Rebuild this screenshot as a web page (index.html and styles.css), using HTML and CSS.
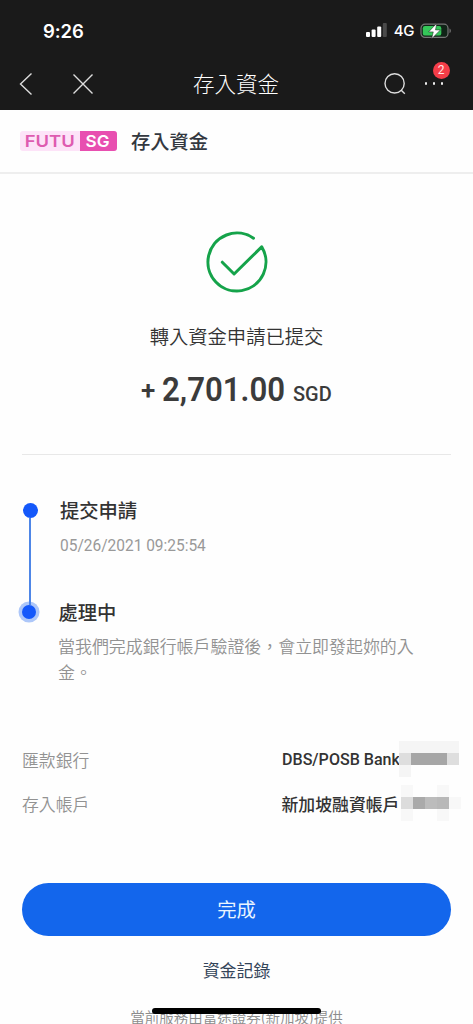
FILE: index.html
```html
<!DOCTYPE html>
<html lang="zh-Hant">
<head>
<meta charset="utf-8">
<meta name="viewport" content="width=device-width, initial-scale=1">
<title>存入資金</title>
<link rel="stylesheet" href="styles.css">
</head>
<body>
<div class="screen">
  <header class="top">
    <div class="status">
      <span class="time">9:26</span>
      <div class="status-right">
        <svg class="signal" width="21" height="14" viewBox="0 0 21 14"><rect x="0" y="9" width="4" height="5" rx="1" fill="#fff"/><rect x="5.6" y="6.5" width="4" height="7.5" rx="1" fill="#fff"/><rect x="11.2" y="3.5" width="4" height="10.5" rx="1" fill="#fff"/><rect x="16.8" y="0" width="4" height="14" rx="1" fill="#4a4a4a"/></svg>
        <span class="network">4G</span>
        <svg class="battery" width="32" height="16" viewBox="0 0 32 16"><rect x="1" y="1.2" width="27" height="13.2" rx="4" fill="#102417" stroke="#777" stroke-width="1.2"/><rect x="2.8" y="3" width="18.5" height="9.6" rx="2.2" fill="#35c759"/><path d="M29.5 5.5c1.8.6 1.8 4 0 4.6z" fill="#777"/><path d="M16.8.2 8.6 8.9h4.7L11.6 15.8 20.4 6.9h-4.9z" fill="#fff" stroke="#1a1a1a" stroke-width=".5"/></svg>
      </div>
    </div>
    <nav class="nav">
      <svg class="back" width="14" height="24" viewBox="0 0 14 24"><path d="M12.5 1.5 1.5 12l11 10.5" /></svg>
      <svg class="close" width="22" height="22" viewBox="0 0 22 22"><path d="m1.5 1.5 19 19m0-19-19 19"/></svg>
      <h1>存入資金</h1>
      <svg class="search" width="22" height="22" viewBox="0 0 22 22"><circle cx="10.6" cy="10.4" r="9.6"/><path d="m17 17 3.8 3.8"/></svg>
      <div class="more"><i></i><i></i><i></i><b class="badge">2</b></div>
    </nav>
  </header>
  <div class="brand">
    <svg class="logo" width="97" height="20" viewBox="0 0 97 20">
      <rect width="97" height="20" rx="3" fill="#fde3f8"/>
      <path d="M60 0h34a3 3 0 0 1 3 3v14a3 3 0 0 1-3 3H60z" fill="#e84fb0"/>
      <text x="4.8" y="15.8" textLength="50" lengthAdjust="spacingAndGlyphs" fill="#de5bb0">FUTU</text>
      <text class="sg" x="65.5" y="15.8" textLength="24" lengthAdjust="spacingAndGlyphs" fill="#fff">SG</text>
    </svg>
    <h2>存入資金</h2>
  </div>
  <main>
    <section class="result">
      <svg class="check" width="62" height="62" viewBox="0 0 62 62"><path d="M47.5 7.2A29 29 0 1 0 55.7 15.9L28.1 43 16.3 31.2"/></svg>
      <p class="message">轉入資金申請已提交</p>
      <p class="amount"><span class="plus">+</span><span class="number">2,701.00</span><span class="currency">SGD</span></p>
    </section>
    <ol class="steps">
      <li class="step">
        <span class="dot"></span>
        <div><h3>提交申請</h3><p class="date">05/26/2021 09:25:54</p></div>
      </li>
      <li class="step current">
        <span class="dot"></span>
        <div><h3>處理中</h3><p class="detail">當我們完成銀行帳戶驗證後，會立即發起妳的入金。</p></div>
      </li>
    </ol>
    <dl class="info">
      <div class="row"><dt>匯款銀行</dt><dd><span class="bank">DBS/POSB Bank</span><svg class="mask" width="60" height="36" viewBox="0 0 60 36"><path fill="#f5f5f5" d="M0 0h60v12H0zM0 24h12v12H0z"/><path fill="#dedede" d="M0 12h60v12H0z"/><path fill="#a6a6a6" d="M12 12h36v12H12z"/></svg></dd></div>
      <div class="row"><dt>存入帳戶</dt><dd><span class="account">新加坡融資帳戶</span><svg class="mask" width="60" height="36" viewBox="0 0 60 36"><path fill="#f8f8f8" d="M0 0h12v36H0zM36 0h12v36H36zM48 12h12v12H48z"/><path fill="#dcdcdc" d="M0 12h12v12H0z"/><path fill="#aaa" d="M12 12h12v12H12z"/><path fill="#bcbcbc" d="M24 12h12v12H24z"/><path fill="#b8b8b8" d="M36 12h12v12H36z"/></svg></dd></div>
    </dl>
    <button class="done">完成</button>
    <a class="record">資金記錄</a>
    <p class="provider">當前服務由富途證券(新加坡)提供</p>
  </main>
  <div class="home"></div>
</div>
</body>
</html>
```
FILE: styles.css
```css
* { box-sizing: border-box; }
body, h1, h2, h3, p, ol, dl, dd { margin: 0; padding: 0; }
body { font-family: Roboto, "Noto Sans CJK TC", sans-serif; background: #fefefe; color: #333; }
h1, h2, h3 { font-family: "Noto Sans CJK TC", sans-serif; }
.screen { position: relative; width: 473px; height: 1024px; overflow: hidden; }
.top { height: 110px; background: #1a1a1a; color: #fff; }
.status { height: 60px; display: flex; justify-content: space-between; align-items: center; padding: 1px 21px 0 43px; }
.time { font: 600 18.5px/24px Inter, sans-serif; letter-spacing: -.1px; }
.status-right { display: flex; align-items: center; }
.network { font: 500 15px/20px Inter, sans-serif; margin: 1px 6px 0 7px; letter-spacing: -.4px; }
.signal { margin-bottom: 1px; }
.nav { height: 50px; display: flex; align-items: center; padding: 0 30px 3px 19px; }
.nav svg { fill: none; stroke: #ddd; stroke-width: 1.4; flex: none; }
.close { margin-left: 38.5px; }
.nav h1 { font-size: 21.5px; font-weight: 300; line-height: 30px; color: #fff; margin: -1px 0 0 99.5px; }
.search { margin-left: auto; }
.more { position: relative; display: flex; justify-content: space-between; width: 18px; margin-left: 19px; }
.more i { width: 2.4px; height: 2.4px; border-radius: 50%; background: #eee; }
.badge { position: absolute; left: 7.5px; top: -20px; width: 17px; height: 17px; border-radius: 50%; background: #f43d48; color: #ffe5e5; font-size: 12px; font-weight: 400; line-height: 17px; text-align: center; }
.brand { height: 64px; border-bottom: 2px solid #eee; display: flex; align-items: center; padding-left: 19.5px; gap: 14.5px; }
.logo { font: 600 16.5px Inter, sans-serif; }
.brand h2 { font-size: 19.3px; font-weight: 500; line-height: 28px; color: #333840; }
main { padding: 0 22px; }
.result { height: 281px; border-bottom: 1px solid #e8e8e8; display: flex; flex-direction: column; align-items: center; padding-top: 57px; }
.check { fill: none; stroke: #15a34a; stroke-width: 3; stroke-linecap: round; stroke-linejoin: round; }
.message { font: 350 19.3px/28px "Noto Sans CJK TC", sans-serif; margin-top: 29px; }
.amount { display: flex; align-items: baseline; width: 191px; margin-top: 20px; line-height: 40px; font-weight: 600; color: #3b3b3b; white-space: nowrap; }
.amount span { flex: none; }
.plus { width: 21px; font-size: 26px; transform: translateY(-2px); }
.number { width: 131px; font-size: 33px; transform: scaleX(.945); transform-origin: left; }
.currency { font-size: 21px; font-weight: 500; transform: scaleX(.95); transform-origin: left; }
.steps { list-style: none; padding-top: 41px; }
.step { position: relative; display: flex; height: 102px; }
.step + .step { height: 139px; }
.step .dot { flex: none; width: 15px; height: 15px; border-radius: 50%; background: #1458fa; margin: 7px 22.5px 0 .5px; }
.step:first-child::before { content: ""; position: absolute; z-index: 1; left: 7px; top: 22px; width: 1.6px; height: 87px; background: #4e86e7; }
.step.current .dot { margin: 7px 22px 0 0; box-shadow: 0 0 0 3.5px #adc7f9; width: 14px; height: 14px; }
.step h3 { font-size: 19.3px; font-weight: 500; line-height: 28px; color: #333; }
.current h3 { margin: -.5px 0 .5px .5px; }
.date { font-size: 17px; line-height: 24px; color: #999; margin-top: 8.5px; transform: scaleX(.91); transform-origin: left; white-space: nowrap; font-weight: 400; }
.detail { width: 360px; font: 350 16.95px/26px "Noto Sans CJK TC", sans-serif; color: #929292; margin-top: 7px; }
.row { display: flex; height: 44px; align-items: center; font-family: "Noto Sans CJK TC", sans-serif; font-size: 16.85px; }
.row dt { width: 259.5px; font-weight: 350; color: #929292; flex: none; }
.row dd { display: flex; align-items: center; width: 177px; flex: none; font-weight: 500; white-space: nowrap; }
.row dd > span { width: 118px; }
.row .bank { width: 117px; font-family: Roboto, sans-serif; font-size: 17px; transform-origin: left; transform: scaleX(.945); }
.mask { flex: none; position: relative; z-index: 1; }
.row + .row .mask { margin-left: 1.5px; }
.done { display: block; width: 429px; height: 53px; margin-top: 58px; border: 0; border-radius: 27px; background: #1366ec; color: #e9f5ff; font: 400 19.3px/52px "Noto Sans CJK TC", sans-serif; padding: 0 0 1px; }
.record { display: block; text-align: center; font: 400 16.95px/26px "Noto Sans CJK TC", sans-serif; color: #34455a; margin-top: 21px; }
.provider { text-align: center; font: 350 14.5px/22px "Noto Sans CJK TC", sans-serif; color: #8c8c8c; margin-top: 23px; white-space: nowrap; }
.home { position: absolute; left: 152px; top: 1008px; width: 169px; height: 6px; border-radius: 3px; background: #000; }
```
